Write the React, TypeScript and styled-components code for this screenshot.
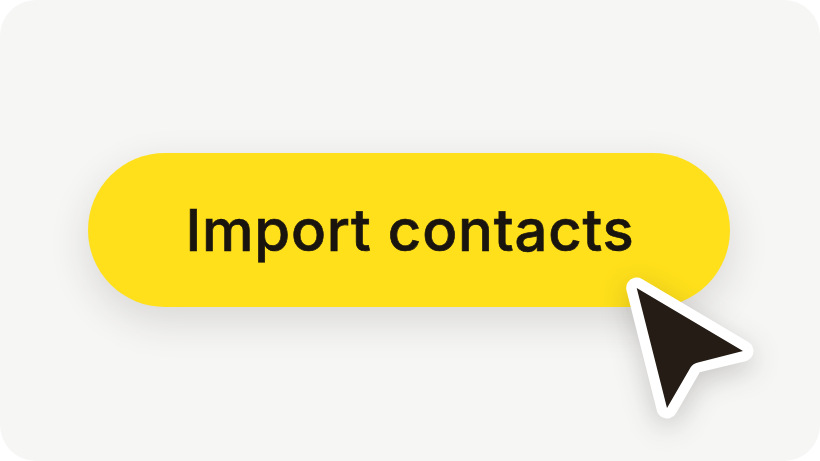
import React from "react";
import styled, { createGlobalStyle } from "styled-components";

const Global = createGlobalStyle`
  html, body { margin: 0; padding: 0; background: #ffffff; }
  #root { width: 820px; height: 461px; overflow: hidden; }
`;

const Panel = styled.main`
  width: 820px;
  height: 461px;
  box-sizing: border-box;
  padding: 0 2px 1px 0;
  background: #f6f6f5;
  border-radius: 36px;
  display: flex;
  align-items: center;
  justify-content: center;
`;

const ButtonWrap = styled.div`
  position: relative;
  width: 642px;
  height: 154px;
`;

const ImportButton = styled.button`
  width: 100%;
  height: 100%;
  border: 0;
  padding: 0 0 0 2px;
  border-radius: 77px;
  background: #ffe01b;
  box-shadow: 0 14px 40px rgba(40, 35, 30, 0.14);
  color: #1a140e;
  font-family: Inter, "Liberation Sans", sans-serif;
  font-size: 58px;
  font-weight: 500;
  letter-spacing: 0.8px;
  -webkit-text-stroke: 0.7px #1a140e;
  line-height: 1;
`;

const Cursor = styled.svg`
  position: absolute;
  left: 528px;
  top: 115px;
  width: 150px;
  height: 160px;
  overflow: visible;
  filter: drop-shadow(0 8px 14px rgba(40, 35, 30, 0.22));
`;

export default function App() {
  return (
    <>
      <Global />
      <Panel>
        <ButtonWrap>
          <ImportButton>Import contacts</ImportButton>
          <Cursor viewBox="0 0 150 160" aria-hidden="true">
            <path
              d="M20.7 20 L127 83 L77 95 L51 140 Z"
              fill="#241c15"
              stroke="#ffffff"
              strokeWidth="21"
              strokeLinejoin="round"
            />
            <path d="M20.7 20 L127 83 L82 94.5 Q77 95.5 74.5 99.5 L51 140 Z" fill="#241c15" />
          </Cursor>
        </ButtonWrap>
      </Panel>
    </>
  );
}
